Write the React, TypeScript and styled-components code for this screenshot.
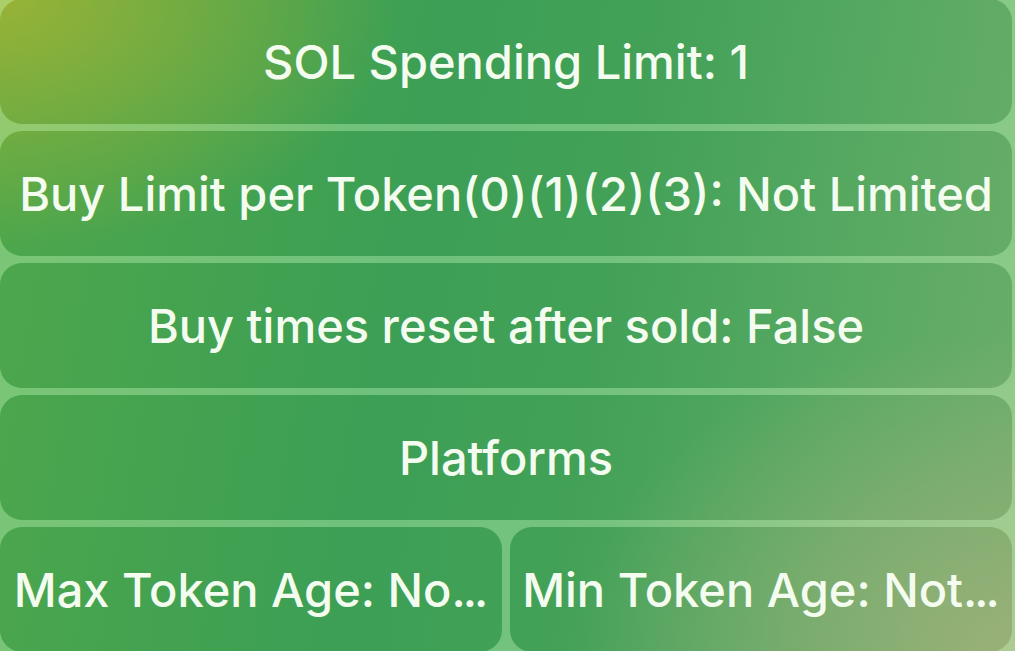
import styled, { createGlobalStyle } from 'styled-components';

// wallpaper: greens with a yellow corner top-left and a pale tan corner bottom-right
const wallpaper = `
  radial-gradient(ellipse 400px 250px at 0 0, rgba(160, 180, 52, 0.9), rgba(160, 180, 52, 0) 100%),
  radial-gradient(ellipse 440px 320px at 100% 100%, rgba(156, 176, 122, 0.95), rgba(156, 176, 122, 0) 100%),
  linear-gradient(100deg, #4ea74b 0%, #3c9f55 40%, #42a157 58%, #58a962 80%, #6cae6a 100%)
`;

const GlobalStyle = createGlobalStyle`
  html, body {
    margin: 0;
    padding: 0;
    height: 100%;
    overflow: hidden;
  }
  body {
    background: ${wallpaper};
    background-attachment: fixed;
    font-family: Inter, "Noto Sans", "Liberation Sans", sans-serif;
  }
`;

interface KeyboardButton {
  label: string;
  truncated?: boolean;
}

const rows: KeyboardButton[][] = [
  [{ label: 'SOL Spending Limit: 1' }],
  [{ label: 'Buy Limit per Token(0)(1)(2)(3): Not Limited' }],
  [{ label: 'Buy times reset after sold: False' }],
  [{ label: 'Platforms' }],
  [
    { label: 'Max Token Age: No', truncated: true },
    { label: 'Min Token Age: Not', truncated: true },
  ],
];

const App = (): JSX.Element => {
  return (
    <>
      <GlobalStyle />
      <Keyboard>
        {rows.map((row, i) => (
          <KeyRow key={i}>
            {row.map((button) => (
              <KeyButton key={button.label}>
                {button.label}
                {button.truncated && <Dots>...</Dots>}
              </KeyButton>
            ))}
          </KeyRow>
        ))}
      </Keyboard>
    </>
  );
};

const Keyboard = styled.div`
  display: flex;
  flex-direction: column;
  gap: 7px;
  width: 1015px;
  height: 652px;
  box-sizing: border-box;
  padding: 0 3px 0 0;
  margin-top: -1px;
  /* light haze over the wallpaper that shows in the gaps */
  background: rgba(205, 255, 195, 0.36);
`;

const KeyRow = styled.div`
  display: flex;
  gap: 8px;
  height: 125px;
  flex: 0 0 125px;
`;

const KeyButton = styled.div`
  flex: 1 1 0;
  min-width: 0;
  display: flex;
  align-items: center;
  justify-content: center;
  border-radius: 22px;
  background: ${wallpaper};
  background-attachment: fixed;
  color: #f4fcf0;
  font-size: 47px;
  font-weight: 500;
  white-space: nowrap;
  overflow: hidden;
`;

const Dots = styled.span`
  letter-spacing: -3px;
  margin-right: 3px;
`;

export default App;
